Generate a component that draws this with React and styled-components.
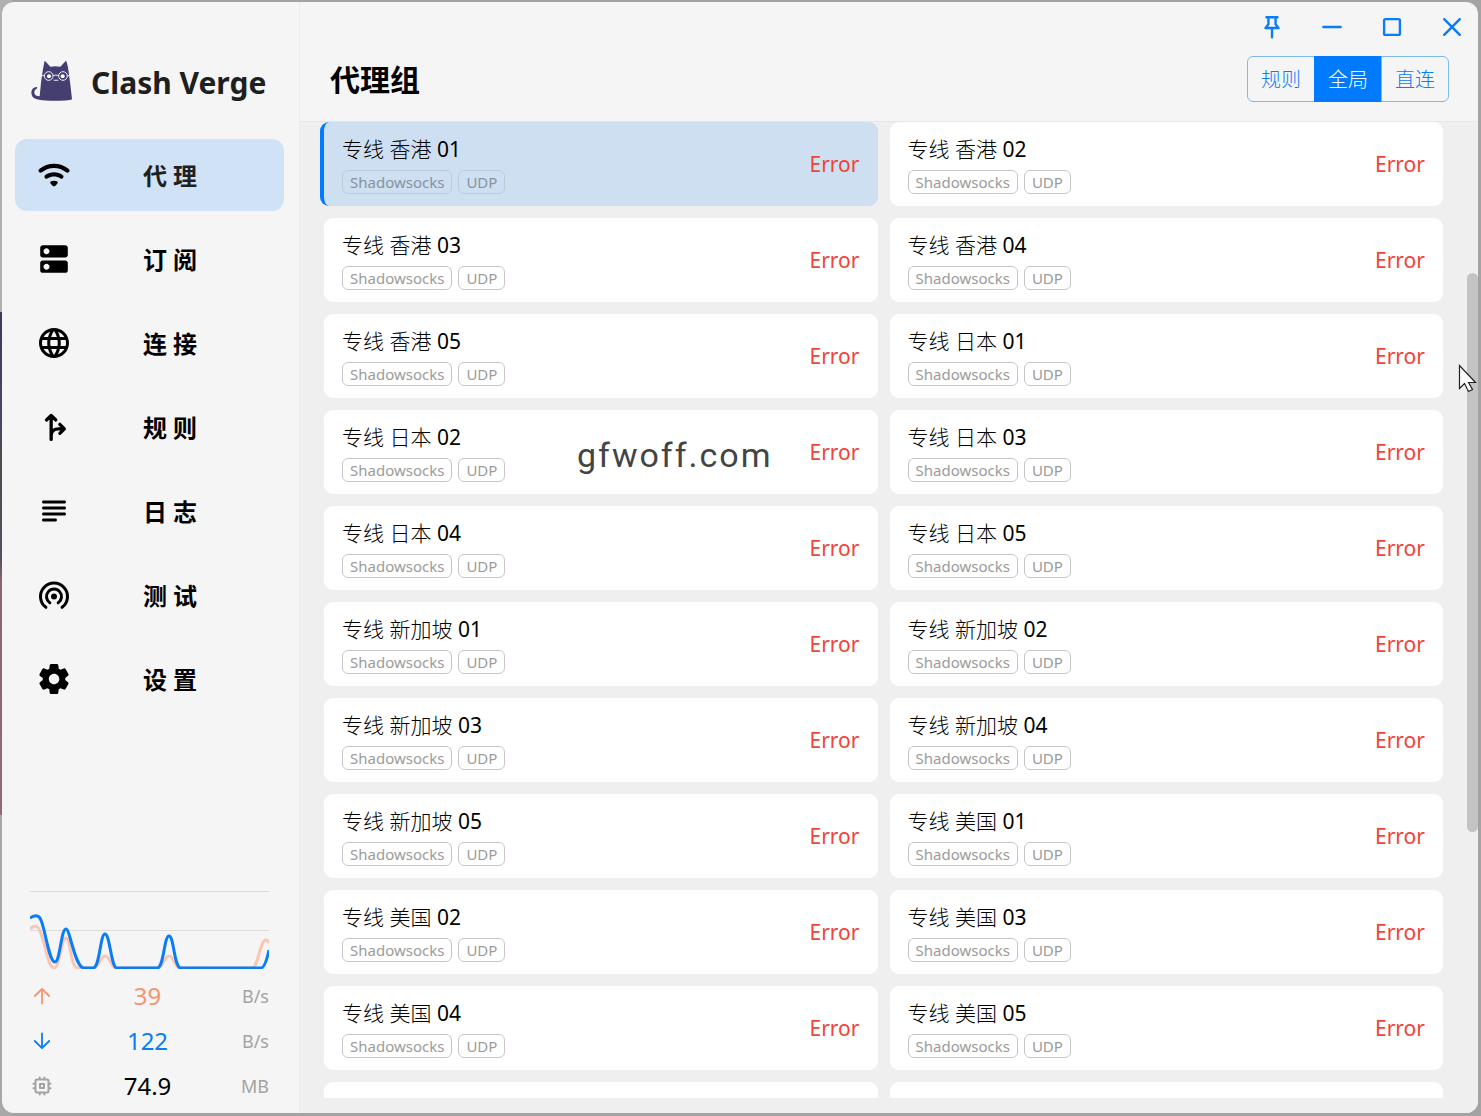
import React, { useState } from 'react'
import styled, { createGlobalStyle } from 'styled-components'



const navItems = [
  { label: '代 理', icon: 'wifi' },
  { label: '订 阅', icon: 'dns' },
  { label: '连 接', icon: 'globe' },
  { label: '规 则', icon: 'fork' },
  { label: '日 志', icon: 'subject' },
  { label: '测 试', icon: 'tether' },
  { label: '设 置', icon: 'settings' },
]

const modes = ['规则', '全局', '直连']

const proxies = [
  '专线 香港 01', '专线 香港 02', '专线 香港 03', '专线 香港 04', '专线 香港 05',
  '专线 日本 01', '专线 日本 02', '专线 日本 03', '专线 日本 04', '专线 日本 05',
  '专线 新加坡 01', '专线 新加坡 02', '专线 新加坡 03', '专线 新加坡 04', '专线 新加坡 05',
  '专线 美国 01', '专线 美国 02', '专线 美国 03', '专线 美国 04', '专线 美国 05',
]

// 24x24 material paths
const paths = {
  wifi: 'M2.06 10.06c.51.51 1.32.56 1.87.1 4.67-3.84 11.45-3.84 16.13-.01.56.46 1.38.42 1.89-.09.59-.59.55-1.57-.1-2.1-5.71-4.67-13.97-4.67-19.69 0-.65.52-.7 1.5-.1 2.1zm7.76 7.76 1.47 1.47c.39.39 1.02.39 1.41 0l1.47-1.47c.47-.47.37-1.28-.23-1.59-1.22-.63-2.68-.63-3.91 0-.57.31-.68 1.12-.21 1.59zm-3.73-3.73c.49.49 1.26.54 1.83.13 2.44-1.73 5.72-1.73 8.16 0 .57.4 1.34.36 1.83-.13l.01-.01c.6-.6.56-1.62-.13-2.11-3.44-2.49-8.13-2.49-11.58 0-.69.5-.73 1.51-.12 2.12z',
  dns: 'M19.500 13h-15C3.600 13 2.800 13.700 2.800 14.600v5c0 .9.8 1.600 1.700 1.600h15c.9 0 1.700-.7 1.700-1.600v-5c0-.9-.8-1.600-1.700-1.600zM7 19.100c-1.100 0-2-.9-2-2s.9-2 2-2 2 .9 2 2-.9 2-2 2zM19.500 2.800h-15c-.9 0-1.700.7-1.700 1.600v5c0 .9.8 1.600 1.700 1.600h15c.9 0 1.700-.7 1.700-1.600v-5c0-.9-.8-1.600-1.700-1.600zM7 8.900c-1.100 0-2-.9-2-2s.9-2 2-2 2 .9 2 2-.9 2-2 2z',
  globe: 'M11.99 2C6.470 2 2 6.480 2 12s4.470 10 9.990 10C17.520 22 22 17.520 22 12S17.520 2 11.990 2zm6.930 6h-2.950c-.32-1.250-.78-2.450-1.380-3.560 1.840.63 3.370 1.910 4.330 3.560zM12 4.040c.83 1.200 1.480 2.530 1.910 3.960h-3.820c.43-1.430 1.080-2.760 1.910-3.960zM4.260 14C4.100 13.360 4 12.690 4 12s.1-1.360.26-2h3.380c-.08.66-.14 1.320-.14 2s.06 1.340.14 2H4.260zm.82 2h2.950c.32 1.250.78 2.450 1.380 3.560-1.840-.63-3.370-1.900-4.330-3.560zm2.950-8H5.080c.96-1.660 2.490-2.930 4.330-3.560C8.810 5.550 8.350 6.750 8.030 8zM12 19.960c-.83-1.200-1.480-2.530-1.910-3.960h3.820c-.43 1.430-1.080 2.760-1.910 3.960zM14.340 14H9.660c-.09-.66-.16-1.320-.16-2s.07-1.350.16-2h4.680c.09.65.16 1.320.16 2s-.07 1.340-.16 2zm.25 5.560c.6-1.110 1.060-2.310 1.380-3.560h2.950c-.96 1.650-2.490 2.930-4.330 3.560zM16.360 14c.08-.66.14-1.320.14-2s-.06-1.340-.14-2h3.380c.16.64.26 1.310.26 2s-.1 1.360-.26 2h-3.380z',
  subject: 'M13 17H5c-.55 0-1 .45-1 1s.45 1 1 1h8c.55 0 1-.45 1-1s-.45-1-1-1zm6-8H5c-.55 0-1 .45-1 1s.45 1 1 1h14c.55 0 1-.45 1-1s-.45-1-1-1zM5 15h14c.55 0 1-.45 1-1s-.45-1-1-1H5c-.55 0-1 .45-1 1s.45 1 1 1zM4 6c0 .55.45 1 1 1h14c.55 0 1-.45 1-1s-.45-1-1-1H5c-.55 0-1 .45-1 1z',
  settings: 'M19.500 12c0-.23-.01-.45-.03-.68l1.860-1.410c.4-.3.51-.86.26-1.300l-1.870-3.230c-.25-.44-.79-.62-1.250-.42l-2.150.91c-.37-.26-.76-.49-1.170-.68l-.29-2.310c-.06-.5-.49-.88-.99-.88h-3.730c-.51 0-.94.38-1 .88l-.29 2.310c-.41.19-.8.42-1.170.68l-2.150-.91c-.46-.2-1-.02-1.250.42L2.410 8.620c-.25.44-.14.99.26 1.300l1.860 1.410c-.02.22-.03.44-.03.67s.01.45.03.68l-1.860 1.410c-.4.3-.51.86-.26 1.300l1.870 3.230c.25.44.79.62 1.250.42l2.150-.91c.37.26.76.49 1.170.68l.29 2.310c.06.5.49.88.99.88h3.730c.5 0 .93-.38.99-.88l.29-2.310c.41-.19.8-.42 1.170-.68l2.150.91c.46.2 1 .02 1.250-.42l1.870-3.230c.25-.44.14-.99-.26-1.300l-1.860-1.410c.03-.23.04-.45.04-.68zm-7.460 3.500c-1.930 0-3.500-1.570-3.500-3.500s1.570-3.500 3.500-3.500 3.500 1.570 3.500 3.500-1.570 3.500-3.500 3.500z',
}

const strokes = {
  fork: { d: 'M10.100 20.300V4.800M7 7.300l3.100-3 3.100 3M10.100 17.800c0-3 2-4.600 5-4.600h3.200M15.900 10.200l3 3-3 3', w: 2.200 },
  tether: { d: 'M6.600 20.200a9 9 0 1 1 10.800 0M9.200 17.200a5 5 0 1 1 5.600 0', w: 2 },
  up: { d: 'M12 19.500V5M4.800 12 12 4.800l7.200 7.200', w: 1.8 },
  down: { d: 'M12 4.500V19M4.800 12l7.200 7.200 7.200-7.200', w: 1.8 },
  chip: { d: 'M7 5.500h10a1.500 1.500 0 0 1 1.500 1.500v10a1.500 1.500 0 0 1-1.500 1.500H7a1.500 1.500 0 0 1-1.500-1.500V7A1.500 1.500 0 0 1 7 5.500zM10 10h4v4h-4zM9.700 3.500v2M14.300 3.500v2M9.700 18.500v2M14.300 18.500v2M3.500 9.700h2M3.500 14.300h2M18.500 9.700h2M18.500 14.300h2', w: 2 },
  pin: { d: 'M6.900 3h10.200M8.700 3v6.500L6 12.900h12l-2.700-3.400V3M12 13v8.500', w: 2.200 },
  minus: { d: 'M4 12h16', w: 2.200 },
  square: { d: 'M6 4.700h12a1.300 1.300 0 0 1 1.300 1.300v12a1.300 1.300 0 0 1-1.300 1.300H6A1.300 1.300 0 0 1 4.700 18V6A1.300 1.300 0 0 1 6 4.700z', w: 2.200 },
  close: { d: 'M4.800 4.800l14.400 14.400M19.200 4.800L4.800 19.200', w: 2.200 },
}

const Icon = ({ name, size }) => {
  const line = strokes[name]
  return (
    <svg width={size} height={size} viewBox='0 0 24 24' aria-hidden='true'>
      {line
        ? <path d={line.d} fill='none' stroke='currentColor' strokeWidth={line.w} strokeLinecap='round' strokeLinejoin='round' />
        : <path d={paths[name]} fill='currentColor' />}
      {name === 'tether' && <circle cx='12' cy='13' r='2' fill='currentColor' />}
    </svg>
  )
}

const CatLogo = () => (
  <svg width='42' height='42' viewBox='92 64 126 126' aria-hidden='true'>
    <path d='M133 63Q142 72 150 81Q165 79 180 81Q189 72 197 63Q201 70 204 90Q210 130 215 178Q214 183 165 183Q132 183 117 180Q94 178 93 160Q93 143 109 142Q112 144 109 147Q101 150 102 160Q104 170 118 170Q121 130 128 87Z' fill='#443f70' />
    <g fill='none' stroke='#f0f0f8' strokeWidth='3'>
      <circle cx='145' cy='109' r='13' />
      <circle cx='188' cy='109' r='13' />
      <path d='M158 108q8-4 17 0M122 108h10M201 108h7M160 121q4 3 7 0q4 3 7 0' />
    </g>
    <circle cx='146' cy='110' r='6' fill='#fff' />
    <circle cx='187' cy='110' r='6' fill='#fff' />
  </svg>
)

const TrafficGraph = () => (
  <Graph viewBox='0 0 239 78' preserveAspectRatio='none' aria-hidden='true'>
    <path d='M0 .5h239M0 39.500h239' stroke='#dcdcdc' fill='none' />
    <path d='M0 38C9 29 11 43 15 56C18 68 20 77 24 77C30 77 31 47 36 47C41 48 40 77 48 77H64C69 77 70 65 75 65S81 77 86 77H128C133 77 134 65 139 65S145 77 150 77H222C228 77 230 49 236 49Q238 49 239 52' fill='none' stroke='#fac6b2' strokeWidth='3' />
    <path d='M0 27C10 21 11 28 14 39C18 57 21 71 25 71C30 71 31 38 36 38C40 38 45 77 54 77H63C70 77 70 43 75 43S81 77 87 77H127C134 77 134 45 139 45S144 77 151 77H231Q235 77 239 59' fill='none' stroke='#0a7cf5' strokeWidth='3' />
  </Graph>
)

export default function App() {
  const [page, setPage] = useState(0)
  const [mode, setMode] = useState(1)
  const [selected, setSelected] = useState(0)

  return (
    <Desktop>
      <GlobalStyle />
      <Window>
        <Sidebar>
          <Brand>
            <CatLogo />
            <BrandName>Clash Verge</BrandName>
          </Brand>
          <Nav>
            {navItems.map((item, i) => (
              <NavButton key={item.icon} $active={i === page} onClick={() => setPage(i)}>
                <Icon name={item.icon} size={36} />
                <NavLabel>{item.label}</NavLabel>
              </NavButton>
            ))}
          </Nav>
          <Traffic>
            <TrafficGraph />
            <Stat $color='#f5946f'>
              <Icon name='up' size={24} />
              <StatValue>39</StatValue>
              <StatUnit>B/s</StatUnit>
            </Stat>
            <Stat $color='#0a7cf5'>
              <Icon name='down' size={24} />
              <StatValue>122</StatValue>
              <StatUnit>B/s</StatUnit>
            </Stat>
            <Stat $color='#a3a3a3' $value='#000'>
              <Icon name='chip' size={24} />
              <StatValue>74.9</StatValue>
              <StatUnit>MB</StatUnit>
            </Stat>
          </Traffic>
        </Sidebar>

        <Main>
          <Controls>
            <ControlButton aria-label='Pin'><Icon name='pin' size={26} /></ControlButton>
            <ControlButton aria-label='Minimize'><Icon name='minus' size={26} /></ControlButton>
            <ControlButton aria-label='Maximize'><Icon name='square' size={26} /></ControlButton>
            <ControlButton aria-label='Close'><Icon name='close' size={26} /></ControlButton>
          </Controls>
          <Header>
            <Title>代理组</Title>
            <ModeGroup>
              {modes.map((m, i) => (
                <ModeButton key={m} $active={i === mode} onClick={() => setMode(i)}>{m}</ModeButton>
              ))}
            </ModeGroup>
          </Header>
          <Body>
            <List>
              {proxies.map((name, i) => (
                <Card key={name} $selected={i === selected} onClick={() => setSelected(i)}>
                  <CardText>
                    <CardName>{name}</CardName>
                    <Tags>
                      <Tag $dim={i === selected}>Shadowsocks</Tag>
                      <Tag $dim={i === selected}>UDP</Tag>
                    </Tags>
                  </CardText>
                  <Delay>Error</Delay>
                </Card>
              ))}
              <Card aria-label='More' />
              <Card aria-label='More' />
            </List>
            <ScrollThumb />
          </Body>
        </Main>
      </Window>
      <Watermark>gfwoff.com</Watermark>
      <Cursor width='20' height='30' viewBox='0 0 20 30' aria-hidden='true'>
        <path d='M1.500 1.500v23l5-5 4 8 4-2-4-7h7z' fill='#fff' stroke='#222' strokeWidth='1.200' />
      </Cursor>
    </Desktop>
  )
}



const GlobalStyle = createGlobalStyle`
  * {
    box-sizing: border-box;
  }

  body {
    margin: 0;
    font-family: 'Noto Sans', 'Noto Sans CJK SC', sans-serif;
    color: #000;
  }

  button {
    font-family: inherit;
    color: inherit;
    border: none;
    background: none;
    padding: 0;
    cursor: pointer;
  }
`

const Desktop = styled.div`
  position: relative;
  height: 100vh;
  padding: 2px 3px 3px 2px;
  background:
    linear-gradient(#b0b0b0 28%, #3f3a5c 28%, #4b4668 38%, #4c4a50 40%, #55505c 50%, #8a6577 52%, #94687a 73%, #a8a8a8 73%) left / 12px 100% no-repeat,
    #a3a3a3;
`

const Window = styled.div`
  display: flex;
  height: 100%;
  overflow: hidden;
  border-radius: 12px;
  background-color: #f5f5f5;
`

const Sidebar = styled.aside`
  display: flex;
  flex-direction: column;
  flex: none;
  width: 298px;
  border-right: 1px solid #ececec;
`

const Brand = styled.div`
  display: flex;
  align-items: center;
  gap: 18px;
  height: 137px;
  padding: 22px 0 0 29px;
`

const BrandName = styled.div`
  padding-top: 3px;
  font-size: 30px;
  font-weight: 700;
  line-height: 44px;
  color: #1f1f1f;
  white-space: nowrap;
`

const Nav = styled.nav`
  display: flex;
  flex-direction: column;
  gap: 12px;
  padding: 0 15px 0 13px;
`

const NavButton = styled.button`
  display: flex;
  align-items: center;
  height: 72px;
  padding: 0 24px 0 21px;
  border-radius: 12px;
  color: ${p => p.$active ? '#1f1f1f' : '#000'};
  background-color: ${p => p.$active ? '#d0e2f5' : 'transparent'};

  svg {
    flex: none;
    color: #000;
  }
`

const NavLabel = styled.span`
  flex: 1;
  padding: 2px 0 0 8px;
  font-size: 24px;
  font-weight: 700;
  line-height: 36px;
  text-align: center;
`

const Traffic = styled.div`
  margin: auto 30px 5px 28px;
`

const Graph = styled.svg`
  display: block;
  width: 100%;
  height: 78px;
  margin-bottom: 4px;
`

const Stat = styled.div`
  display: grid;
  grid-template-columns: 24px 1fr 32px;
  align-items: center;
  height: 45px;
  color: ${p => p.$color};

  span:first-of-type {
    color: ${p => p.$value || p.$color};
  }
`

const StatValue = styled.span`
  padding-left: 4px;
  font-size: 24px;
  text-align: center;
`

const StatUnit = styled.span`
  display: flex;
  justify-content: flex-end;
  font-size: 18px;
  color: #a3a3a3;
`

const Main = styled.main`
  display: flex;
  flex-direction: column;
  flex: 1;
  min-width: 0;
`

const Controls = styled.div`
  display: flex;
  justify-content: flex-end;
  gap: 34px;
  height: 50px;
  padding-right: 13px;
`

const ControlButton = styled.button`
  display: flex;
  align-items: center;
  justify-content: center;
  width: 26px;
  height: 50px;
  color: #0a7cf5;
`

const Header = styled.header`
  display: flex;
  align-items: flex-start;
  justify-content: space-between;
  height: 70px;
  padding: 4px 29px 0 30px;
  border-bottom: 1px solid #e6e6e6;
`

const Title = styled.h1`
  margin: 0;
  font-size: 30px;
  font-weight: 700;
  line-height: 48px;
`

const ModeGroup = styled.div`
  display: flex;
`

const ModeButton = styled.button`
  width: 68px;
  height: 46px;
  padding-bottom: 2px;
  border: 1px solid ${p => p.$active ? '#007aff' : '#80b8f5'};
  font-size: 20px;
  font-weight: 300;
  color: ${p => p.$active ? '#fff' : '#0a7cf5'};
  background-color: ${p => p.$active ? '#007aff' : 'transparent'};

  &:first-child {
    border-radius: 6px 0 0 6px;
  }

  &:last-child {
    border-radius: 0 6px 6px 0;
  }

  & + & {
    margin-left: -1px;
  }
`

const Body = styled.div`
  position: relative;
  flex: 1;
  min-height: 0;
  padding: 0 35px 15px 20px;
  background-color: #efefef;
`

const List = styled.div`
  display: grid;
  grid-template-columns: 1fr 1fr;
  grid-auto-rows: 84px;
  align-content: start;
  gap: 12px;
  height: 100%;
  overflow: hidden;
  padding-left: 4px;
`

const Card = styled.button`
  display: flex;
  align-items: center;
  justify-content: space-between;
  height: 84px;
  padding: 0 18px;
  border-radius: 9px;
  text-align: left;
  background-color: ${p => p.$selected ? '#cedff1' : '#fff'};
  ${p => p.$selected && `
    margin-left: -4px;
    border-left: 4px solid #007aff;
  `}
`

const CardText = styled.div`
  display: flex;
  flex-direction: column;
  padding-bottom: 1px;
`

const CardName = styled.div`
  font-family: 'Noto Sans', 'Noto Sans CJK SC Light', 'Noto Sans CJK SC', sans-serif;
  font-size: 21px;
  font-weight: 400;
  line-height: 32px;
  white-space: nowrap;
`

const Tags = styled.div`
  display: flex;
  gap: 6px;
  margin-top: 5px;
`

const Tag = styled.span`
  padding: 0 7px;
  border: 1px solid ${p => p.$dim ? '#bccbdc' : '#c6c6c6'};
  border-radius: 6px;
  font-size: 15px;
  line-height: 22px;
  color: ${p => p.$dim ? '#8593a2' : '#9b9b9b'};
`

const Delay = styled.span`
  font-size: 21px;
  color: #f04438;
`

const ScrollThumb = styled.div`
  position: absolute;
  top: 151px;
  right: 0;
  width: 11px;
  height: 559px;
  border-radius: 6px;
  background-color: #c1c3c5;
`

const Watermark = styled.div`
  position: absolute;
  top: 435px;
  left: 577px;
  font-family: Roboto, sans-serif;
  font-size: 34px;
  line-height: 40px;
  letter-spacing: 2px;
  color: #444;
  pointer-events: none;
`

const Cursor = styled.svg`
  position: absolute;
  top: 364px;
  left: 1458px;
  pointer-events: none;
`
